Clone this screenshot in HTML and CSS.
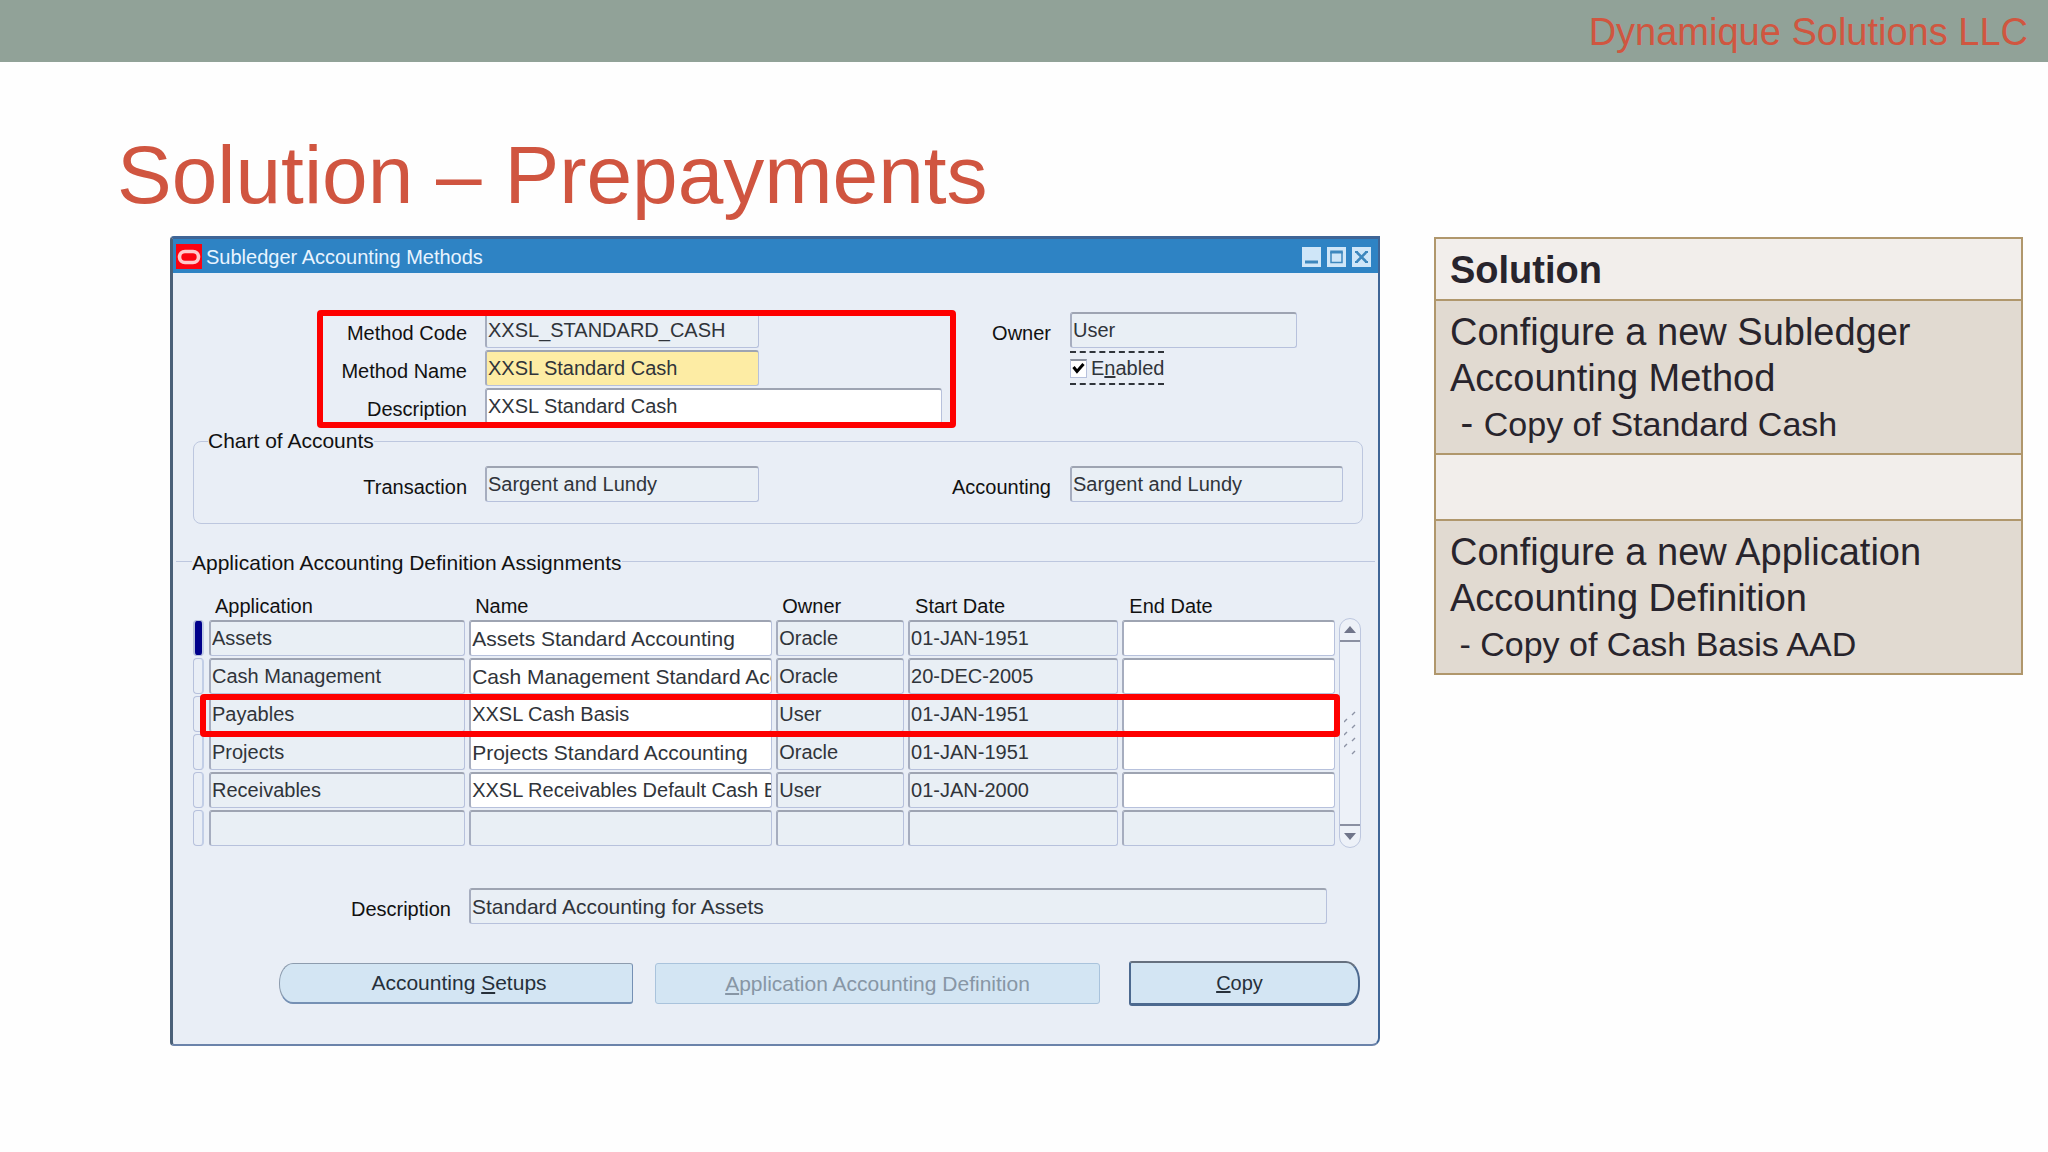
FILE: index.html
```html
<!DOCTYPE html>
<html lang="en">
<head>
<meta charset="utf-8">
<title>Solution – Prepayments</title>
<link rel="stylesheet" href="styles.css">
</head>
<body>
<header class="banner">Dynamique Solutions LLC</header>
<h1 class="headline">Solution – Prepayments</h1>
<main class="slide">
  <section class="window">
    <div class="titlebar">
      <svg class="logo" viewBox="0 0 26 25" aria-hidden="true"><rect width="26" height="25" fill="#fb0310"/><rect x="3.500" y="7.500" width="19" height="11" rx="5.500" fill="none" stroke="#ffc9cc" stroke-width="3.600"/></svg>
      <h2 class="titlebar-text">Subledger Accounting Methods</h2>
      <button class="winbtn" type="button" aria-label="Minimize"><svg viewBox="0 0 19 20"><path d="M3 15H16" stroke="#3d87bd" stroke-width="3"/></svg></button>
      <button class="winbtn" type="button" aria-label="Maximize"><svg viewBox="0 0 19 20"><path d="M4 5V15.500H15V5" fill="none" stroke="#3d87bd" stroke-width="1.500"/><path d="M3.200 5H15.800" stroke="#3d87bd" stroke-width="3"/></svg></button>
      <button class="winbtn" type="button" aria-label="Close"><svg viewBox="0 0 19 20"><path d="M5 5.500L14 14.500M14 5.500L5 14.500" stroke="#3d87bd" stroke-width="2.500"/><path d="M3 5H6M13 5H16M3 15H6M13 15H16" stroke="#3d87bd" stroke-width="2"/></svg></button>
    </div>
    <form class="form">
      <div class="methods">
        <label class="label c1" for="code">Method Code</label>
        <input class="field c3" id="code" value="XXSL_STANDARD_CASH" readonly>
        <label class="label c5" for="owner">Owner</label>
        <input class="field c7" id="owner" value="User" readonly>
        <label class="label c1" for="name">Method Name</label>
        <input class="field required c3" id="name" value="XXSL Standard Cash">
        <label class="check c7"><input type="checkbox" checked><svg viewBox="0 0 17 19" aria-hidden="true"><path d="M3.500 8L7 12.500L13.500 5" fill="none" stroke="#000" stroke-width="3"/></svg><span>E<u>n</u>abled</span></label>
        <label class="label c1" for="desc">Description</label>
        <input class="field editable c3 wide" id="desc" value="XXSL Standard Cash">
        <div class="callout callout-methods"></div>
      </div>

      <fieldset class="chart">
        <legend>Chart of Accounts</legend>
        <div class="chart-grid">
          <label class="label c1" for="trans">Transaction</label>
          <input class="field c3" id="trans" value="Sargent and Lundy" readonly>
          <label class="label c4" for="acct">Accounting</label>
          <input class="field c6" id="acct" value="Sargent and Lundy" readonly>
        </div>
      </fieldset>

      <h3 class="section">Application Accounting Definition Assignments</h3>

      <div class="assign">
        <table class="grid">
          <colgroup><col class="w-mark"><col class="w-app"><col class="w-name"><col class="w-owner"><col class="w-start"><col></colgroup>
          <thead><tr><td></td><th>Application</th><th>Name</th><th>Owner</th><th class="inset">Start Date</th><th class="inset">End Date</th></tr></thead>
          <tbody>
            <tr><td><span class="mark current"></span></td><td><input class="field" aria-label="Application" value="Assets" readonly></td><td><input class="field large editable" aria-label="Name" value="Assets Standard Accounting"></td><td><input class="field" aria-label="Owner" value="Oracle" readonly></td><td><input class="field" aria-label="Start Date" value="01-JAN-1951" readonly></td><td><input class="field editable" aria-label="End Date"></td></tr>
            <tr><td><span class="mark"></span></td><td><input class="field" aria-label="Application" value="Cash Management" readonly></td><td><input class="field large editable" aria-label="Name" value="Cash Management Standard Accounting"></td><td><input class="field" aria-label="Owner" value="Oracle" readonly></td><td><input class="field" aria-label="Start Date" value="20-DEC-2005" readonly></td><td><input class="field editable" aria-label="End Date"></td></tr>
            <tr class="marked"><td><span class="mark"></span></td><td><input class="field" aria-label="Application" value="Payables" readonly></td><td><input class="field editable" aria-label="Name" value="XXSL Cash Basis"></td><td><input class="field" aria-label="Owner" value="User" readonly></td><td><input class="field" aria-label="Start Date" value="01-JAN-1951" readonly></td><td><input class="field editable" aria-label="End Date"><span class="callout callout-row"></span></td></tr>
            <tr><td><span class="mark"></span></td><td><input class="field" aria-label="Application" value="Projects" readonly></td><td><input class="field large editable" aria-label="Name" value="Projects Standard Accounting"></td><td><input class="field" aria-label="Owner" value="Oracle" readonly></td><td><input class="field" aria-label="Start Date" value="01-JAN-1951" readonly></td><td><input class="field editable" aria-label="End Date"></td></tr>
            <tr><td><span class="mark"></span></td><td><input class="field" aria-label="Application" value="Receivables" readonly></td><td><input class="field editable" aria-label="Name" value="XXSL Receivables Default Cash Basis"></td><td><input class="field" aria-label="Owner" value="User" readonly></td><td><input class="field" aria-label="Start Date" value="01-JAN-2000" readonly></td><td><input class="field editable" aria-label="End Date"></td></tr>
            <tr><td><span class="mark"></span></td><td><input class="field" aria-label="Application" readonly></td><td><input class="field" aria-label="Name" readonly></td><td><input class="field" aria-label="Owner" readonly></td><td><input class="field" aria-label="Start Date" readonly></td><td><input class="field" aria-label="End Date" readonly></td></tr>
          </tbody>
        </table>
        <div class="scroll">
          <button type="button" class="arrow up" aria-label="Scroll up"><svg viewBox="0 0 12 7"><path d="M0 7L6 0L12 7Z" fill="#70758a"/></svg></button>
          <svg class="grip" viewBox="0 0 12 44" aria-hidden="true"><path d="M8 4L11 1M0 11L3 8M8 17L11 14M0 24L3 21M8 30L11 27M0 36L3 33M8 43L11 40" stroke="#8d93a5" stroke-width="1.400"/></svg>
          <button type="button" class="arrow down" aria-label="Scroll down"><svg viewBox="0 0 12 7"><path d="M0 0L6 7L12 0Z" fill="#70758a"/></svg></button>
        </div>
      </div>

      <div class="detail">
        <label class="label c1" for="detail">Description</label>
        <input class="field large c3" id="detail" value="Standard Accounting for Assets" readonly>
      </div>

      <div class="actions">
        <button type="button" class="btn first">Accounting <u>S</u>etups</button>
        <button type="button" class="btn" disabled><u>A</u>pplication Accounting Definition</button>
        <button type="button" class="btn last"><u>C</u>opy</button>
      </div>
    </form>
  </section>

  <table class="notes">
    <thead><tr><th>Solution</th></tr></thead>
    <tbody>
      <tr class="shade"><td>Configure a new Subledger Accounting Method<div class="sub"><span class="dash"> - </span>Copy of Standard Cash</div></td></tr>
      <tr class="blank"><td></td></tr>
      <tr class="shade"><td>Configure a new Application Accounting Definition<div class="sub"> - Copy of Cash Basis AAD</div></td></tr>
    </tbody>
  </table>
</main>
</body>
</html>
```
FILE: styles.css
```css
* { box-sizing: border-box; }

body {
  margin: 0;
  background: #fefefe;
  font-family: "Liberation Sans", Arial, sans-serif;
  color: #28242c;
}

input, button {
  font: inherit;
  color: inherit;
  margin: 0;
}

.banner {
  background: #91a298;
  color: #d05640;
  font-size: 38px;
  line-height: 44px;
  padding: 10px 20px 8px;
  text-align: right;
}

.headline {
  margin: 63px 0 11px;
  padding-left: 117px;
  color: #d05540;
  font-size: 82px;
  font-weight: 400;
  line-height: 100px;
}

.slide {
  display: grid;
  grid-template-columns: minmax(0, 1210fr) minmax(0, 589fr);
  gap: 54px;
  align-items: start;
  padding: 0 25px 40px 170px;
}

/* application window */

.window {
  border: solid #3f6596;
  border-width: 3px 2px 2px 3px;
  border-left-color: #4a6078;
  border-bottom-color: #6b83aa;
  border-radius: 4px 0 8px 4px;
  background: #e9eef6;
  color: #111;
  font-size: 21px;
  line-height: 24px;
}

.titlebar {
  display: flex;
  align-items: center;
  gap: 6px;
  height: 34px;
  padding: 1px 7px 0 3px;
  background: #2e83c4;
}

.logo { width: 26px; height: 25px; }

.titlebar-text {
  flex: 1;
  margin: 0;
  margin-left: -2px;
  color: #e8f4ff;
  font-size: 20px;
  font-weight: 400;
}

.winbtn {
  width: 19px;
  height: 20px;
  padding: 0;
  border: 0;
  background: #cfe6f8;
}

.winbtn svg { display: block; width: 100%; height: 100%; }

.form { padding: 39px 0 38px; }

.methods, .chart-grid, .detail { display: grid; }

.methods {
  position: relative;
  grid-template-columns: 294fr 18fr 274fr 183fr 109fr 19fr 227fr 46fr 35fr;
  grid-auto-rows: 36px;
  row-gap: 2px;
}

.c1 { grid-column: 1; }
.c3 { grid-column: 3; }
.c4 { grid-column: 4; }
.c5 { grid-column: 5; }
.c6 { grid-column: 6; }
.c7 { grid-column: 7; }
.wide { grid-column: 3 / 5; }

.label {
  padding-top: 9px;
  font-size: 20px;
  text-align: right;
  white-space: nowrap;
}

.field {
  display: block;
  width: 100%;
  min-width: 0;
  height: 36px;
  padding: 0 0 0 1px;
  border: 1px solid #b7c1dc;
  border-top: 2px solid #9ea4b2;
  border-left: 2px solid #a6adbf;
  border-radius: 3px;
  background: #e9eff5;
  color: #30343a;
  font-size: 20px;
  outline: 0;
}

.large { font-size: 21px; }
.editable { background: #fff; }
.required { background: #fdeca4; }

.check {
  position: relative;
  justify-self: start;
  display: flex;
  align-items: center;
  gap: 4px;
  height: 34px;
  margin-top: 1px;
  border: dashed #30343a;
  border-width: 2px 0;
  color: #30343a;
  font-size: 20px;
}

.check input {
  appearance: none;
  width: 17px;
  height: 19px;
  border: 1px solid #b7c1dc;
  border-top: 2px solid #8e94a2;
  background: #fff;
}

.check svg {
  position: absolute;
  left: 0;
  width: 17px;
  height: 19px;
}

.check input:not(:checked) + svg { display: none; }

.callout {
  position: absolute;
  border: 6px solid #fe0000;
  border-radius: 4px;
  pointer-events: none;
}

.callout-methods {
  grid-area: 1 / 3 / 4 / 5;
  inset: -2px -14px -4px -168px;
}

.chart {
  min-width: 0;
  margin: 5px 15px 0 20px;
  padding: 13px 0 21px;
  border: 1px solid #bdc7df;
  border-radius: 8px;
}

.chart legend { margin-left: 14px; padding: 0; }

.chart-grid { grid-template-columns: 273fr 18fr 274fr 292fr 19fr 273fr 19fr; }

.section {
  display: flex;
  align-items: center;
  margin: 27px 3px 19px;
  font-size: 21px;
  font-weight: 400;
}

.section::before, .section::after {
  content: "";
  width: 16px;
  height: 1px;
  margin-bottom: 3px;
  background: #bdc7df;
}

.section::after { flex: 1; }

/* assignment lines */

.assign {
  display: flex;
  margin: 0 17px 0 20px;
}

.grid {
  flex: 1;
  table-layout: fixed;
  border-collapse: collapse;
}

.w-mark { width: 16px; }
.w-app { width: 22.7%; }
.w-name { width: 26.8%; }
.w-owner { width: 11.5%; }
.w-start { width: 18.7%; }

.grid th {
  height: 26px;
  padding: 0 0 2px 6px;
  font-size: 20px;
  font-weight: 400;
  text-align: left;
}

.grid .inset { padding-left: 7px; }

.grid td { padding: 0 4px 2px 0; }

.marked { position: relative; }

.callout-row { inset: -2px -1px -3px 7px; }

.mark {
  display: block;
  width: 11px;
  height: 36px;
  border: 1px solid #b7c1dc;
  border-right: 2px solid #c2cee6;
  border-radius: 4px;
}

.current { background: #00008b; border-width: 1px 2px; }

.scroll {
  display: flex;
  flex-direction: column;
  justify-content: space-between;
  align-items: center;
  width: 22px;
  margin-top: 24px;
  border: 1px solid #bdc7df;
  border-radius: 11px;
  background: #edf1f8;
}

.arrow {
  display: flex;
  justify-content: center;
  align-items: center;
  width: 100%;
  height: 23px;
  padding: 0;
  border: 0;
  background: none;
}

.arrow svg { width: 12px; height: 7px; }
.up { border-bottom: 2px solid #8b90a2; }
.down { border-top: 2px solid #8b90a2; }
.grip { width: 12px; height: 44px; }

.detail {
  grid-template-columns: 278fr 18fr 858fr 51fr;
  margin-top: 40px;
}

.actions {
  display: grid;
  grid-template-columns: 354fr 22fr 445fr 29fr 231fr;
  align-items: center;
  margin: 37px 18px 0 106px;
}

.btn {
  grid-column: 3;
  height: 41px;
  padding: 0;
  border: 1px solid #a9c3dc;
  border-radius: 3px;
  background: #d3e5f3;
  color: #26303a;
}

.btn:disabled { color: #8796a5; }

.first {
  grid-column: 1;
  padding-left: 6px;
  border-color: #8d9cae #7590b4 #7590b4 #8d9cae;
  border-bottom-width: 2px;
  border-radius: 14px 3px 3px 14px / 20px 3px 3px 20px;
}

.last {
  grid-column: 5;
  height: 45px;
  padding-right: 10px;
  border: 2px solid #4c698f;
  border-top-color: #66707e;
  border-bottom-width: 3px;
  border-radius: 3px 14px 14px 3px / 3px 20px 20px 3px;
  font-size: 20px;
}

/* notes beside the window */

.notes {
  width: 100%;
  margin-top: 1px;
  border-collapse: collapse;
  font-size: 38px;
  line-height: 46px;
}

.notes th, .notes td {
  padding: 8px 14px 6px;
  border: 2px solid #b0976c;
  background: #f2eeeb;
  text-align: left;
  vertical-align: top;
}

.notes .shade td { background: #e1dad1; }
.notes .blank td { height: 66px; }

.sub {
  font-size: 34px;
  white-space: pre-wrap;
}

.dash { font-size: 38px; line-height: 1px; }
```
